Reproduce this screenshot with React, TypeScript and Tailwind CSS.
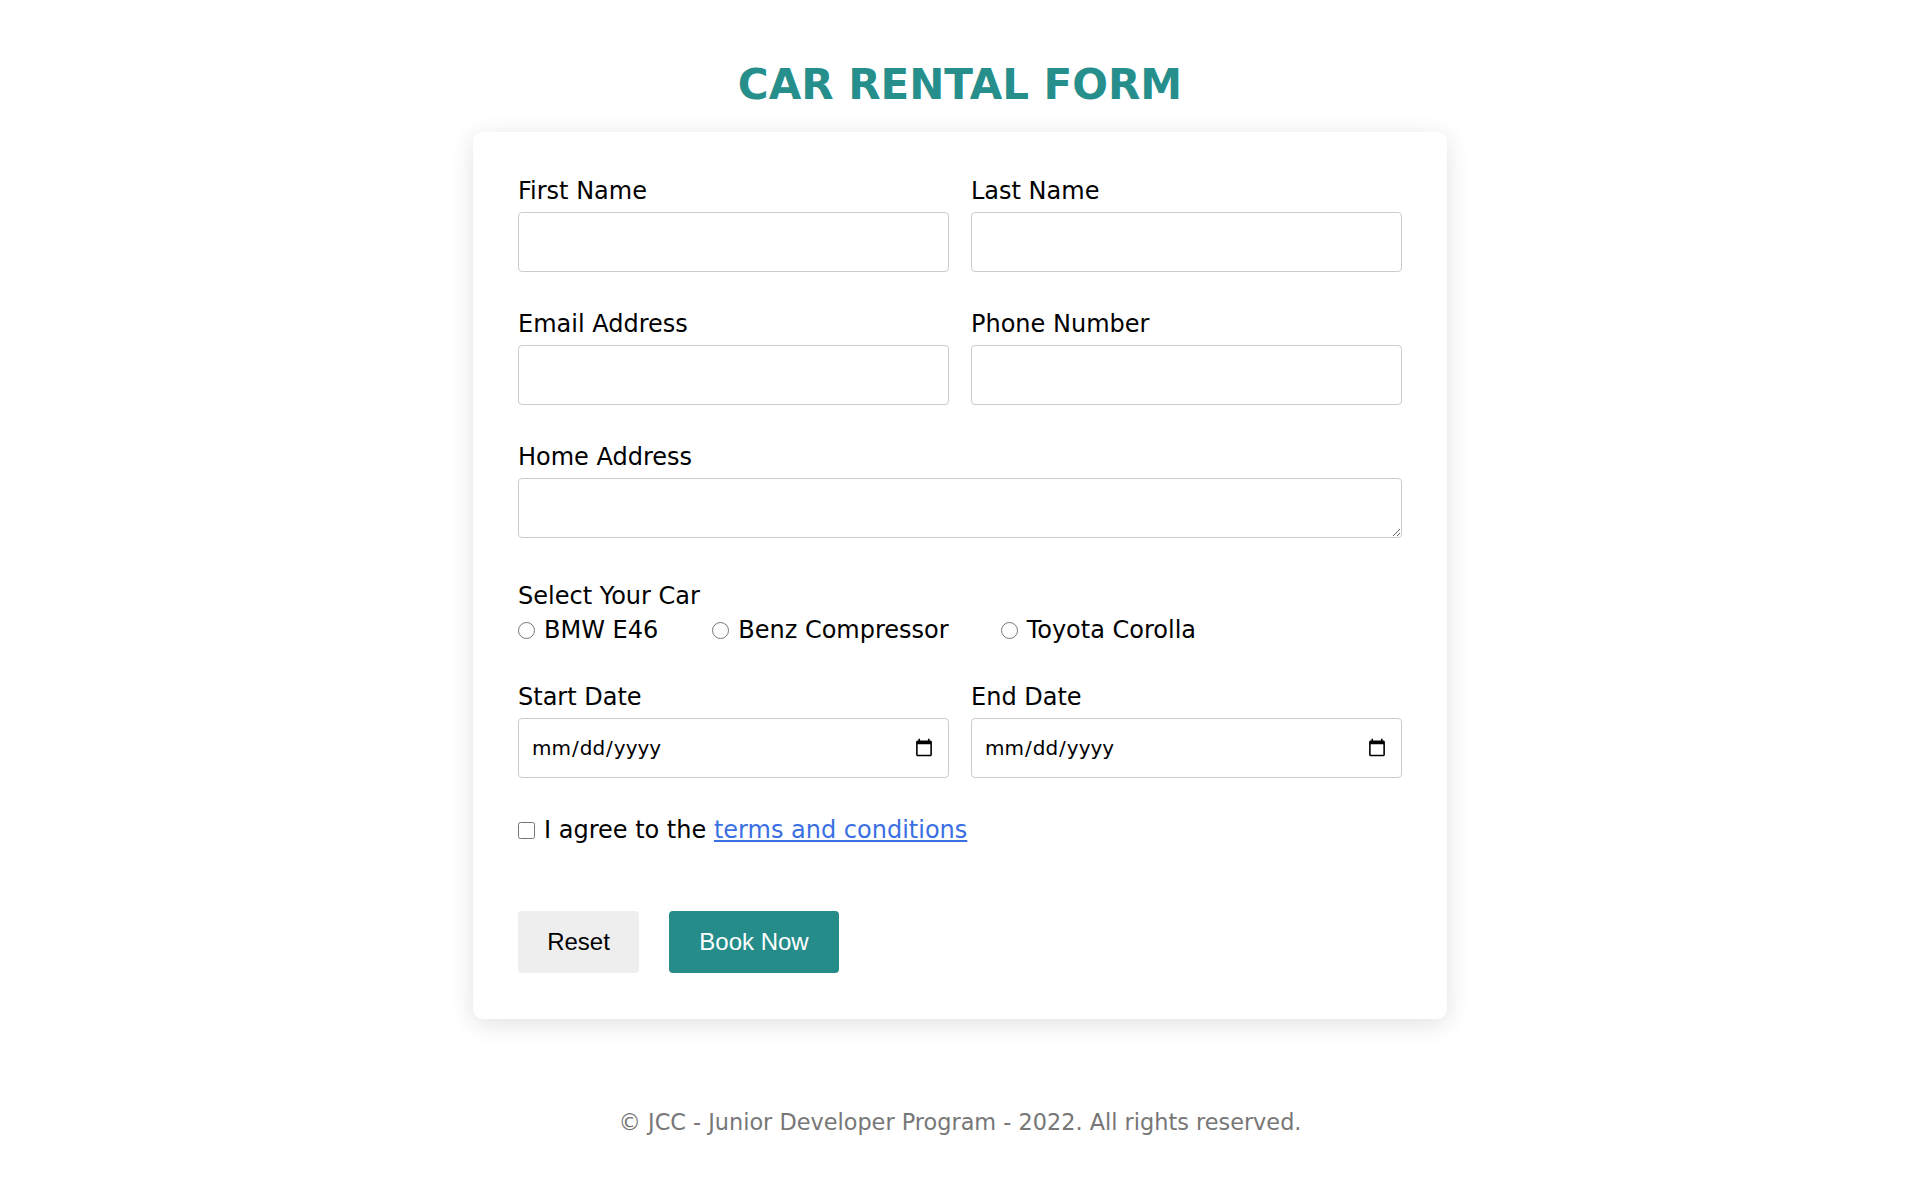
import React from "react";

const inputCls =
  "block w-full h-[60px] border border-[#cccccc] rounded-[4px] bg-white px-3 text-[20px] text-black outline-none";

function Field({ label, children }: { label: string; children: React.ReactNode }) {
  return (
    <div className="flex flex-col">
      <label className="block text-[24px] leading-[28px] mb-[7px] text-black">{label}</label>
      {children}
    </div>
  );
}

export default function App() {
  return (
    <div className="min-h-[1195px] bg-white font-['DejaVu_Sans',sans-serif] text-black pt-[60px]">
      <h1 className="text-center text-[42px] leading-[49px] font-bold text-[#268f8b] mb-[23px]">
        CAR RENTAL FORM
      </h1>
      <div className="mx-auto w-[974px] bg-white rounded-[10px] shadow-[0_5px_25px_rgba(0,0,0,0.12)] pt-[45px] pb-[46px] px-[45px]">
        <div className="grid grid-cols-2 gap-x-[22px] gap-y-[38px]">
          <Field label="First Name">
            <input type="text" className={inputCls} />
          </Field>
          <Field label="Last Name">
            <input type="text" className={inputCls} />
          </Field>
          <Field label="Email Address">
            <input type="email" className={inputCls} />
          </Field>
          <Field label="Phone Number">
            <input type="tel" className={inputCls} />
          </Field>
          <div className="col-span-2">
            <Field label="Home Address">
              <textarea className="block w-full h-[60px] border border-[#cccccc] rounded-[4px] bg-white px-3 py-2 text-[20px] outline-none resize-y" />
            </Field>
          </div>
        </div>

        <div className="mt-[44px]">
          <div className="text-[24px] leading-[28px] mb-[6px]">Select Your Car</div>
          <div className="flex items-center text-[24px] leading-[28px]">
            <label className="flex items-center">
              <input type="radio" name="car" className="m-0 mr-[9px] w-[17px] h-[17px]" />
              <span>BMW E46</span>
            </label>
            <label className="flex items-center ml-[54px]">
              <input type="radio" name="car" className="m-0 mr-[9px] w-[17px] h-[17px]" />
              <span>Benz Compressor</span>
            </label>
            <label className="flex items-center ml-[52px]">
              <input type="radio" name="car" className="m-0 mr-[9px] w-[17px] h-[17px]" />
              <span>Toyota Corolla</span>
            </label>
          </div>
        </div>

        <div className="grid grid-cols-2 gap-x-[22px] mt-[39px]">
          <Field label="Start Date">
            <input type="date" className={inputCls} />
          </Field>
          <Field label="End Date">
            <input type="date" className={inputCls} />
          </Field>
        </div>

        <label className="flex items-center mt-[38px] text-[24px] leading-[28px]">
          <input type="checkbox" className="m-0 mr-[9px] w-[17px] h-[17px]" />
          <span>
            I agree to the{" "}
            <a href="#" className="text-[#3a6fe3] underline">
              terms and conditions
            </a>
          </span>
        </label>

        <div className="flex gap-[30px] mt-[67px] font-['Liberation_Sans',Arial,sans-serif] text-[24px]">
          <button className="h-[62px] w-[121px] rounded-[4px] bg-[#eeeeee] text-black">Reset</button>
          <button className="h-[62px] w-[170px] rounded-[4px] bg-[#268c89] text-white">Book Now</button>
        </div>
      </div>

      <footer className="mt-[90px] text-center text-[22.4px] leading-[26px] text-[#777777]">
        © JCC - Junior Developer Program - 2022. All rights reserved.
      </footer>
    </div>
  );
}
